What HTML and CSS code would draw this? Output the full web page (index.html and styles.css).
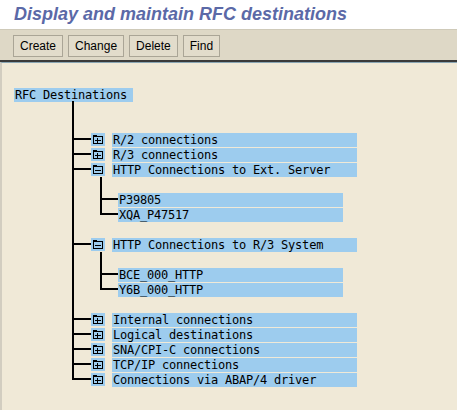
FILE: index.html
```html
<!DOCTYPE html>
<html lang="en">
<head>
<meta charset="utf-8">
<title>Display and maintain RFC destinations</title>
<link rel="stylesheet" href="styles.css">
</head>
<body>
<header class="title-bar">
  <h1>Display and maintain RFC destinations</h1>
</header>
<nav class="toolbar">
  <button class="btn">Create</button>
  <button class="btn">Change</button>
  <button class="btn">Delete</button>
  <button class="btn">Find</button>
</nav>
<main class="content">
  <div class="tree">
    <div class="root"><span class="label root-label">RFC Destinations</span></div>
    <ul class="branches">
      <li class="node">
        <div class="row">
          <svg class="icon" viewBox="0 0 14 13" width="14" height="13"><use href="#folder-closed"/></svg>
          <span class="label">R/2 connections</span>
        </div>
      </li>
      <li class="node">
        <div class="row">
          <svg class="icon" viewBox="0 0 14 13" width="14" height="13"><use href="#folder-closed"/></svg>
          <span class="label">R/3 connections</span>
        </div>
      </li>
      <li class="node">
        <div class="row">
          <svg class="icon" viewBox="0 0 14 13" width="14" height="13"><use href="#folder-open"/></svg>
          <span class="label">HTTP Connections to Ext. Server</span>
        </div>
        <ul class="leaves">
          <li class="leaf"><span class="label">P39805</span></li>
          <li class="leaf"><span class="label">XQA_P47517</span></li>
        </ul>
      </li>
      <li class="node">
        <div class="row">
          <svg class="icon" viewBox="0 0 14 13" width="14" height="13"><use href="#folder-open"/></svg>
          <span class="label">HTTP Connections to R/3 System</span>
        </div>
        <ul class="leaves">
          <li class="leaf"><span class="label">BCE_000_HTTP</span></li>
          <li class="leaf"><span class="label">Y6B_000_HTTP</span></li>
        </ul>
      </li>
      <li class="node">
        <div class="row">
          <svg class="icon" viewBox="0 0 14 13" width="14" height="13"><use href="#folder-closed"/></svg>
          <span class="label">Internal connections</span>
        </div>
      </li>
      <li class="node">
        <div class="row">
          <svg class="icon" viewBox="0 0 14 13" width="14" height="13"><use href="#folder-closed"/></svg>
          <span class="label">Logical destinations</span>
        </div>
      </li>
      <li class="node">
        <div class="row">
          <svg class="icon" viewBox="0 0 14 13" width="14" height="13"><use href="#folder-closed"/></svg>
          <span class="label">SNA/CPI-C connections</span>
        </div>
      </li>
      <li class="node">
        <div class="row">
          <svg class="icon" viewBox="0 0 14 13" width="14" height="13"><use href="#folder-closed"/></svg>
          <span class="label">TCP/IP connections</span>
        </div>
      </li>
      <li class="node">
        <div class="row">
          <svg class="icon" viewBox="0 0 14 13" width="14" height="13"><use href="#folder-closed"/></svg>
          <span class="label">Connections via ABAP/4 driver</span>
        </div>
      </li>
    </ul>
  </div>
</main>

<!-- folder glyphs shared by the tree rows -->
<svg class="defs" width="0" height="0" aria-hidden="true">
  <defs>
    <g id="folder-closed" shape-rendering="crispEdges">
      <rect width="14" height="13" fill="#9dccee"/>
      <path d="M2.5 3.5h9v7h-9z M2.5 3.5v-1h3v1" fill="none" stroke="#000"/>
      <path d="M4 7.5h6 M6.5 5v5" fill="none" stroke="#000"/>
    </g>
    <g id="folder-open" shape-rendering="crispEdges">
      <rect width="14" height="13" fill="#9dccee"/>
      <path d="M2.5 3.5h9v7h-9z M2.5 3.5v-1h3v1" fill="none" stroke="#000"/>
      <path d="M4 7.5h6" fill="none" stroke="#000"/>
    </g>
  </defs>
</svg>
</body>
</html>
```

FILE: styles.css
```css
html, body {
  margin: 0;
  padding: 0;
  height: 100%;
}

body {
  background: #f0e9d7;
  font-family: "Liberation Sans", Arial, sans-serif;
}

/* title band */
.title-bar {
  height: 29px;
  background: #ffffff;
  border-bottom: 1px solid #cfcab9;
}

.title-bar h1 {
  margin: 0;
  padding-left: 14px;
  font: italic bold 18px/29px "Liberation Sans", Arial, sans-serif;
  color: #5b69a7;
}

/* application toolbar */
.toolbar {
  box-sizing: border-box;
  height: 32px;
  display: flex;
  gap: 5px;
  padding: 5px 0 0 13px;
  background: #ded8c6;
  border-bottom: 2px solid #3a3a3a;
}

.btn {
  height: 22px;
  padding: 0 6px;
  border: 1px solid #aaa596;
  background: #e2dccb;
  color: #000;
  font: 12px "Liberation Sans", Arial, sans-serif;
  cursor: pointer;
}

/* tree area */
.content {
  box-sizing: border-box;
  height: calc(100% - 62px);
  background: #f0e9d7;
  border-top: 1px solid #8aa6b4;
  border-left: 2px solid #d2cdc0;
  padding: 25px 0 0 12px;
}

.tree ul {
  list-style: none;
  margin: 0;
  position: relative;
}

.label {
  display: block;
  box-sizing: border-box;
  height: 14px;
  padding-left: 1px;
  background: #9dccee;
  color: #000;
  font: 12px/14px "DejaVu Sans Mono", monospace;
  letter-spacing: -0.22px;
  white-space: pre;
}

.root {
  margin-bottom: 1px;
}

.root-label {
  width: 119px;
}

/* first level: trunk plus one branch per folder */
.branches {
  margin-left: 58px !important;
  padding: 30px 0 0 0;
}

.branches::before {
  content: "";
  position: absolute;
  left: 0;
  top: -2px;
  bottom: 8px;
  width: 2px;
  background: #000;
}

.node {
  padding-left: 19px;
}

.row {
  position: relative;
  display: flex;
  height: 14px;
  margin-bottom: 1px;
}

.row::before {
  content: "";
  position: absolute;
  left: -19px;
  top: 5px;
  width: 19px;
  height: 2px;
  background: #000;
}

.icon {
  display: block;
  flex: none;
  margin-right: 7px;
}

.row .label {
  width: 245px;
}

/* second level: destinations under an opened folder */
.leaves {
  margin-left: 9px !important;
  padding: 15px 0;
}

.leaves::before {
  content: "";
  position: absolute;
  left: 0;
  top: -1px;
  bottom: 23px;
  width: 2px;
  background: #000;
}

.leaf {
  padding-left: 18px;
  margin-bottom: 1px;
}

.leaf .label {
  position: relative;
  width: 225px;
}

.leaf .label::before {
  content: "";
  position: absolute;
  left: -18px;
  top: 5px;
  width: 18px;
  height: 2px;
  background: #000;
}

.defs {
  position: absolute;
  width: 0;
  height: 0;
}
```
